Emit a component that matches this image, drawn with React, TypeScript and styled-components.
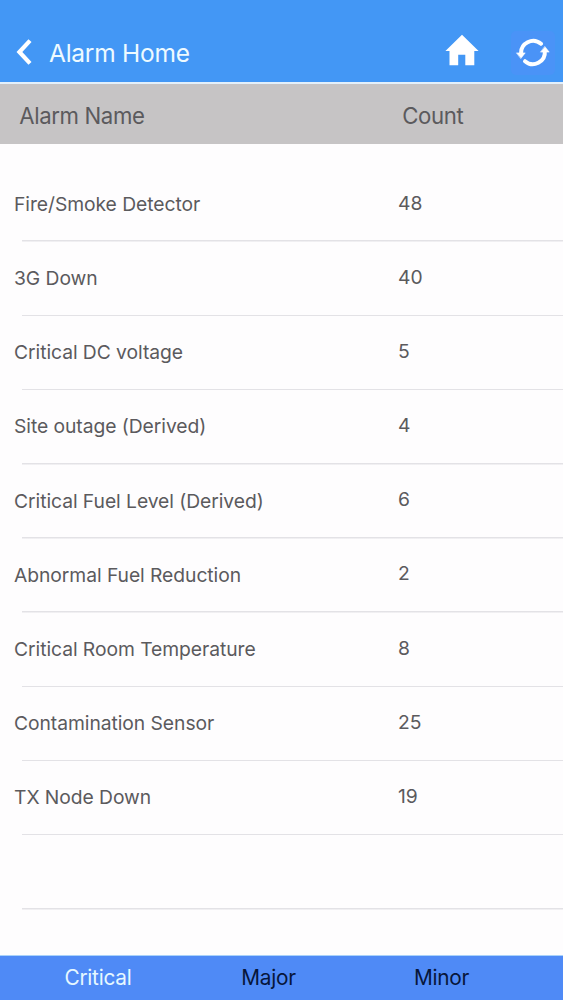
import React from 'react';
import styled, { createGlobalStyle } from 'styled-components';

const GlobalStyle = createGlobalStyle`
  * { box-sizing: border-box; }
  body { margin: 0; background: #fefdfe; }
`;

const Screen = styled.div`
  width: 563px;
  height: 1000px;
  display: flex;
  flex-direction: column;
  overflow: hidden;
  background: #fefdfe;
  font-family: Inter, 'Liberation Sans', sans-serif;
  color: #5b5a5d;
`;

const NavBar = styled.header`
  flex: none;
  height: 84px;
  padding: 24px 8px 0 12px;
  display: flex;
  align-items: center;
  background: #4397f5;
  border-bottom: 2px solid #e3f0fb;
`;

const Title = styled.h1`
  margin: 0 auto 0 13px;
  font-size: 24.5px;
  line-height: 30px;
  font-weight: 400;
  letter-spacing: -0.25px;
  color: #eefaff;
  white-space: nowrap;
`;

const IconButton = styled.button<{ $width: number; $tint?: string }>`
  flex: none;
  width: ${p => p.$width}px;
  height: 44px;
  padding: 0;
  border: 0;
  border-radius: 5px;
  display: flex;
  align-items: center;
  justify-content: center;
  background: ${p => p.$tint ?? 'transparent'};
  & + & { margin-left: 32px; }
`;

const HomeButton = styled(IconButton)`
  padding-bottom: 6px;
`;

const ColumnHeader = styled.div`
  flex: none;
  height: 60px;
  padding: 2px 0 0 19.3px;
  display: grid;
  grid-template-columns: 383px 1fr;
  align-items: center;
  background: #c6c4c5;
  font-size: 22.2px;
  letter-spacing: -0.38px;
  line-height: 29px;
`;

const List = styled.ul`
  flex: 1;
  margin: 0;
  padding: 23.8px 0 0;
  list-style: none;
`;

const Row = styled.li`
  height: 74.2px;
  padding: 0 0 2.2px 14px;
  display: grid;
  grid-template-columns: 384px 1fr;
  align-items: center;
  font-size: 19.3px;
  line-height: 24px;
  letter-spacing: -0.06px;
  background: linear-gradient(#e3e2e6, #e3e2e6) 22px 100% / 541px 1.5px no-repeat;
`;

const Count = styled.span`
  padding-bottom: 2.6px;
`;

const TabBar = styled.nav`
  flex: none;
  height: 45.5px;
  padding: 0 34px 0 11px;
  display: grid;
  grid-template-columns: 174px 167px 179px;
  background: #4f8af6;
  border-top: 1px solid #a9d2fa;
`;

const Tab = styled.button<{ $active?: boolean }>`
  border: 0;
  padding: 0;
  background: none;
  font: 400 20.8px/26px Inter, 'Liberation Sans', sans-serif;
  letter-spacing: -0.25px;
  color: ${p => (p.$active ? '#e6f8ff' : '#07163a')};
`;

const alarms: [string, number][] = [
  ['Fire/Smoke Detector', 48],
  ['3G Down', 40],
  ['Critical DC voltage', 5],
  ['Site outage (Derived)', 4],
  ['Critical Fuel Level (Derived)', 6],
  ['Abnormal Fuel Reduction', 2],
  ['Critical Room Temperature', 8],
  ['Contamination Sensor', 25],
  ['TX Node Down', 19],
];

const BackIcon = () => (
  <svg width="24" height="30" viewBox="0 0 24 30" fill="none" stroke="#fff" strokeWidth="4.2">
    <path d="M18 2.6 7.4 14 18 25.4" />
  </svg>
);

const HomeIcon = () => (
  <svg width="34" height="32" viewBox="0 0 34 32" fill="#fff">
    <path d="M17 .8 33.6 17H29.3V31.3H20.3V20.8H13.2V31.3H4.5V17H.4Z" />
  </svg>
);

const RefreshIcon = () => (
  <svg width="36" height="32" viewBox="0 0 36 32" fill="none" stroke="#fff" strokeWidth="4" strokeLinecap="round">
    <path d="M6.2 17A12 12 0 0 1 26 6.8" />
    <path d="M29.8 14A12 12 0 0 1 10 24.2" />
    <path d="M1.8 15.9H10.2L6 21.3ZM25.8 15.1H34.2L30 9.7Z" fill="#fff" strokeWidth=".6" strokeLinejoin="round" />
  </svg>
);

export default function App() {
  return (
    <>
      <GlobalStyle />
      <Screen>
        <NavBar>
          <IconButton $width={24} aria-label="Back"><BackIcon /></IconButton>
          <Title>Alarm Home</Title>
          <HomeButton $width={34} aria-label="Home"><HomeIcon /></HomeButton>
          <IconButton $width={44} $tint="#4a93f7" aria-label="Refresh"><RefreshIcon /></IconButton>
        </NavBar>
        <ColumnHeader>
          <span>Alarm Name</span>
          <span>Count</span>
        </ColumnHeader>
        <List>
          {alarms.map(([name, count]) => (
            <Row key={name}>
              <span>{name}</span>
              <Count>{count}</Count>
            </Row>
          ))}
          <Row />
        </List>
        <TabBar>
          <Tab $active>Critical</Tab>
          <Tab>Major</Tab>
          <Tab>Minor</Tab>
        </TabBar>
      </Screen>
    </>
  );
}
